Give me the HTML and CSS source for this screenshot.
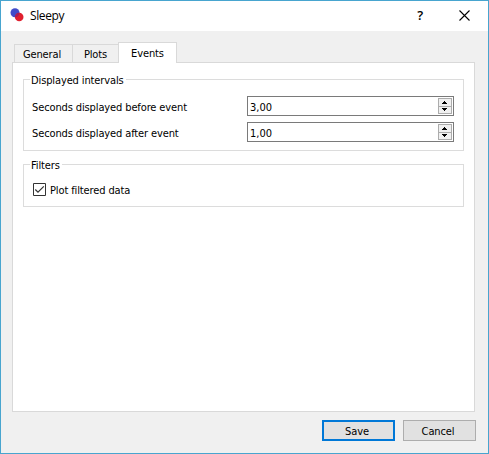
FILE: index.html
```html
<!DOCTYPE html>
<html lang="en">
<head>
<meta charset="utf-8">
<title>Sleepy</title>
<link rel="stylesheet" href="styles.css">
</head>
<body>
<div class="window">
  <header class="titlebar">
    <svg class="logo" width="14" height="14" viewBox="0 0 14 14"><circle cx="5" cy="4.8" r="4.5" fill="#414bc9"/><circle cx="9.2" cy="9" r="4.3" fill="#e0202f"/><path d="M5 9.3A4.3 4.3 0 0 1 9.5 4.8A4.5 4.5 0 0 1 5 9.3Z" fill="#a51f58"/></svg>
    <span class="title">Sleepy</span>
    <span class="help">?</span>
    <svg class="close" width="11" height="11" viewBox="0 0 11 11"><path d="M.5 .5L10.5 10.5M10.5 .5L.5 10.5" stroke="#000" stroke-width="1.1"/></svg>
  </header>
  <main class="content">
    <nav class="tabs">
      <div class="tab general"><span>General</span></div>
      <div class="tab plots"><span>Plots</span></div>
      <div class="tab active"><span>Events</span></div>
    </nav>
    <section class="panel">
      <fieldset class="group intervals">
        <legend>Displayed intervals</legend>
        <div class="row">
          <label>Seconds displayed before event</label>
          <div class="spin"><span>3,00</span>
            <svg width="14" height="16" viewBox="0 0 14 16" shape-rendering="crispEdges"><path d="M.5 .5H13.5V15.5H.5ZM0 8.5H14" fill="#f0f0f0" stroke="#acacac"/><path d="M6 3H7V4H8V5H9V6H4V5H5V4H6ZM4 10H9V11H8V12H7V13H6V12H5V11H4Z" fill="#000"/></svg>
          </div>
        </div>
        <div class="row">
          <label>Seconds displayed after event</label>
          <div class="spin"><span>1,00</span>
            <svg width="14" height="16" viewBox="0 0 14 16" shape-rendering="crispEdges"><path d="M.5 .5H13.5V15.5H.5ZM0 8.5H14" fill="#f0f0f0" stroke="#acacac"/><path d="M6 3H7V4H8V5H9V6H4V5H5V4H6ZM4 10H9V11H8V12H7V13H6V12H5V11H4Z" fill="#000"/></svg>
          </div>
        </div>
      </fieldset>
      <fieldset class="group filters">
        <legend>Filters</legend>
        <label class="check">
          <svg width="13" height="13" viewBox="0 0 13 13"><path d="M.5 .5H12.5V12.5H.5Z" fill="#fff" stroke="#333"/><path d="M2.3 6.5L5 9.2L10.8 3.4" fill="none" stroke="#333" stroke-width="1.2"/></svg>
          <span>Plot filtered data</span>
        </label>
      </fieldset>
    </section>
    <footer class="actions">
      <button class="btn primary">Save</button>
      <button class="btn">Cancel</button>
    </footer>
  </main>
</div>
</body>
</html>
```
FILE: styles.css
```css
* { box-sizing: border-box; }
body {
  margin: 0;
  font: 11px/14px "DejaVu Sans Condensed", "DejaVu Sans", sans-serif;
  font-stretch: condensed;
  letter-spacing: -0.12px;
  color: #000;
}
svg { display: block; flex: none; }
.window {
  width: 489px;
  height: 454px;
  border: 1px solid #48a5cf;
  background: #f0f0f0;
}
.titlebar {
  display: flex;
  align-items: center;
  height: 30px;
  padding: 0 18px 0 9px;
  background: #fff;
}
.logo { margin-top: -2px; }
.title { margin-left: 6px; font: 12px/16px "Open Sans", sans-serif; letter-spacing: -0.4px; }
.help { margin: -2px 0 0 auto; font: 600 13px/16px "Open Sans", sans-serif; }
.close { margin: -2px 0 0 36px; }
.content { padding: 11px 13px 0 11px; }
.tabs { display: flex; align-items: flex-end; height: 20px; padding-left: 2px; }
.tab {
  display: flex;
  justify-content: center;
  height: 18px;
  padding-top: 3px;
  border: 1px solid #d9d9d9;
  border-width: 1px 0 0 1px;
  white-space: nowrap;
}
.general { width: 58px; padding-right: 3px; }
.plots { width: 46px; }
.active {
  position: relative;
  width: 59px;
  height: 21px;
  margin-bottom: -1px;
  padding-top: 4px;
  border-right-width: 1px;
  background: #fff;
}
.panel {
  height: 350px;
  padding: 10px 10px 0;
  border: 1px solid #d9d9d9;
  background: #fff;
}
.group {
  min-width: 0;
  margin: 0;
  border: 1px solid #dcdcdc;
}
.group legend { height: 13px; margin-left: -3px; padding: 0 2px 0 1px; line-height: 16px; white-space: nowrap; }
.intervals { height: 78px; padding: 10px 9px 0; }
.filters { height: 49px; margin-top: 7px; padding: 12px 9px 0; }
.row { display: flex; align-items: center; justify-content: space-between; height: 20px; margin-bottom: 6px; white-space: nowrap; }
.row label { margin-left: -1px; padding-top: 3px; }
.spin {
  display: flex;
  align-items: center;
  justify-content: space-between;
  width: 207px;
  height: 20px;
  padding: 0 1px 0 2px;
  border: 1px solid #7a7a7a;
}
.spin span { padding-top: 3px; letter-spacing: 0; }
.check { display: flex; align-items: center; gap: 4px; height: 13px; white-space: nowrap; }
.check span { padding-top: 2px; }
.actions { display: flex; justify-content: flex-end; gap: 8px; margin: 8px -1px 0 0; }
.btn {
  width: 73px;
  height: 21px;
  padding: 2px 3px 0 0;
  border: 1px solid #adadad;
  background: #e1e1e1;
  color: #000;
  font: inherit;
  letter-spacing: inherit;
}
.primary { border: 2px solid #0078d7; }
```
